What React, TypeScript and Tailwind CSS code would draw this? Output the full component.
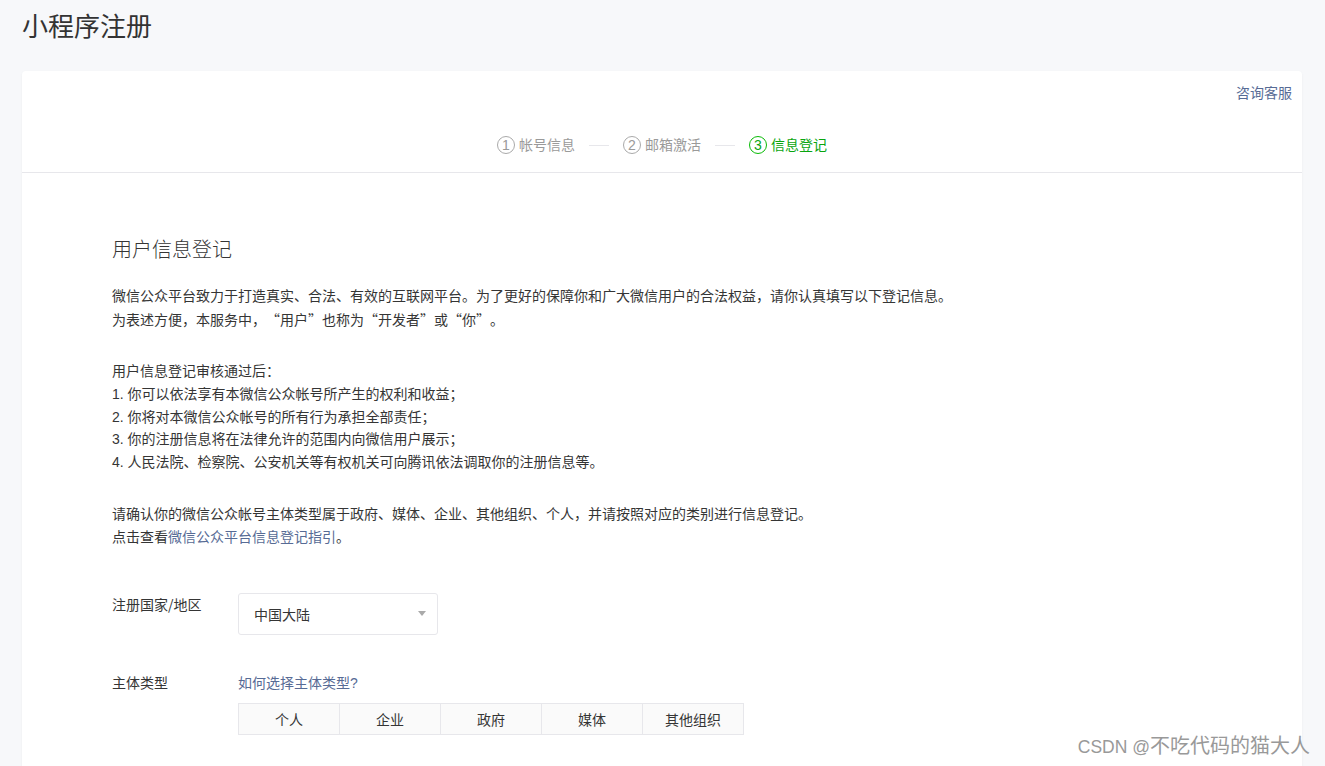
import React from "react";

const font = { fontFamily: '"Liberation Sans", "Noto Sans CJK SC", sans-serif' };

function Step({ n, label, active }: { n: number; label: string; active?: boolean }) {
  return (
    <div className={`flex items-center ${active ? "text-[#09a50f]" : "text-[#9a9a9a]"}`}>
      <span
        className={`flex h-[18px] w-[18px] items-center justify-center rounded-full border text-[14px] leading-none ${
          active ? "border-[#09bb07]" : "border-[#aaaaaa]"
        }`}
      >
        {n}
      </span>
      <span className="ml-[4px] text-[14px] leading-[20px]">{label}</span>
    </div>
  );
}

function Line() {
  return <div className="mx-[14px] h-px w-[20px] bg-[#e7e7eb]" />;
}

const cjk = "font-['Noto_Sans_CJK_SC',sans-serif]";

export default function App() {
  return (
    <div style={font} className="relative h-[766px] w-full overflow-hidden bg-[#f7f8fa] text-[14px] text-[#353535]">
      <h1 className="h-[71px] pl-[22px] pt-[9px] text-[26px] font-normal leading-[36px] text-[#333333]">小程序注册</h1>

      <div className="ml-[22px] mr-[23px] rounded-t-[4px] bg-white pb-[40px] shadow-[0_1px_2px_rgba(150,150,150,0.12)]">
        <div className="h-[102px] border-b border-[#e7e7eb]">
          <div className="flex justify-end pr-[10px] pt-[12px]">
            <a className="text-[14px] leading-[20px] text-[#576b95]">咨询客服</a>
          </div>
          <div className="mt-[32px] flex items-center justify-center">
            <Step n={1} label="帐号信息" />
            <Line />
            <Step n={2} label="邮箱激活" />
            <Line />
            <Step n={3} label="信息登记" active />
          </div>
        </div>

        <div className="pl-[90px] pt-[63px]">
          <h2 className="text-[20px] font-light leading-[28px] text-[#353535]">用户信息登记</h2>

          <div className="mt-[21px] leading-[23px]">
            <p>微信公众平台致力于打造真实、合法、有效的互联网平台。为了更好的保障你和广大微信用户的合法权益，请你认真填写以下登记信息。</p>
            <p className={`${cjk} [text-spacing-trim:space-all] [font-feature-settings:'chws'_0]`}>为表述方便，本服务中，“用户”也称为“开发者”或“你”。</p>
          </div>

          <div className="mt-[29px] leading-[22.75px]">
            <p>用户信息登记审核通过后：</p>
            <p>1. 你可以依法享有本微信公众帐号所产生的权利和收益；</p>
            <p>2. 你将对本微信公众帐号的所有行为承担全部责任；</p>
            <p>3. 你的注册信息将在法律允许的范围内向微信用户展示；</p>
            <p>4. 人民法院、检察院、公安机关等有权机关可向腾讯依法调取你的注册信息等。</p>
          </div>

          <div className="mt-[29px] leading-[23px]">
            <p>请确认你的微信公众帐号主体类型属于政府、媒体、企业、其他组织、个人，并请按照对应的类别进行信息登记。</p>
            <p>
              点击查看<a className="text-[#576b95]">微信公众平台信息登记指引</a>。
            </p>
          </div>

          <div className="mt-[44px] flex items-start">
            <label className={`w-[126px] leading-[22px] ${cjk}`}>注册国家/地区</label>
            <div className="flex h-[42px] w-[200px] items-center justify-between rounded-[3px] border border-[#e7e7eb] pl-[15px] pr-[11px]">
              <span className="pt-[4px]">中国大陆</span>
              <span className="mb-[1px] h-0 w-0 border-x-[4px] border-t-[5px] border-x-transparent border-t-[#aaaaaa]" />
            </div>
          </div>

          <div className="mt-[37px] flex items-start">
            <label className="w-[126px] leading-[22px]">主体类型</label>
            <div>
              <a className="block leading-[22px] text-[#576b95]">如何选择主体类型?</a>
              <div className="mt-[9px] flex h-[32px] w-[506px] border border-[#e7e7eb] bg-[#fafafa]">
                {["个人", "企业", "政府", "媒体", "其他组织"].map((t, i) => (
                  <div
                    key={t}
                    className={`flex flex-1 items-center justify-center pt-[2px] leading-none ${i < 4 ? "border-r border-[#e7e7eb]" : ""}`}
                  >
                    {t}
                  </div>
                ))}
              </div>
            </div>
          </div>
        </div>
      </div>

      <div className="absolute bottom-[5px] right-[15px] text-[20px] leading-[28px] text-[#999999]">
        <span className="text-[17.5px]">CSDN @</span>不吃代码的猫大人
      </div>
    </div>
  );
}
